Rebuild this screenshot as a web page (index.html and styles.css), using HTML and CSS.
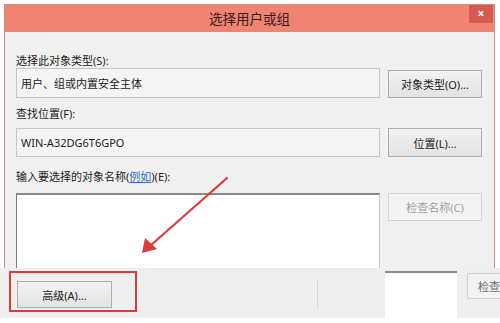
FILE: index.html
```html
<!DOCTYPE html>
<html lang="zh-CN">
<head>
<meta charset="utf-8">
<title>选择用户或组</title>
<link rel="stylesheet" href="styles.css">
</head>
<body>
<div class="dialog">
  <div class="titlebar">
    <span></span>
    <span class="title">选择用户或组</span>
    <span class="close">×</span>
  </div>
  <div class="content">
    <div class="label l1">选择此对象类型(S):</div>
    <div></div>
    <div class="field f1">用户、组或内置安全主体</div>
    <div class="btn b1">对象类型(O)...</div>
    <div class="label l2">查找位置(F):</div>
    <div></div>
    <div class="field f2">WIN-A32DG6T6GPO</div>
    <div class="btn b2">位置(L)...</div>
    <div class="label l3">输入要选择的对象名称(<span class="link">例如</span>)(E):</div>
    <div></div>
    <div class="textarea"></div>
    <div class="btn disabled b3">检查名称(C)</div>
  </div>
</div>
<div class="footer">
  <div class="btn adv">高级(A)...</div>
  <div class="ghost-line"></div>
  <div class="ghost-box"></div>
  <div class="btn ghost-btn">检查</div>
</div>
<div class="highlight"></div>
<svg class="arrow" width="500" height="323" viewBox="0 0 500 323">
  <line x1="227" y1="178" x2="150" y2="246" stroke="#e0393b" stroke-width="2.2" stroke-linecap="round"/>
  <polygon points="142,253 145,238 157,249" fill="#e0393b"/>
</svg>
</body>
</html>
```

FILE: styles.css
```css
html, body {
  margin: 0;
  padding: 0;
}
body {
  width: 500px;
  height: 323px;
  overflow: hidden;
  background: #ffffff;
  position: relative;
  font-family: "Noto Sans", "Noto Sans CJK SC", sans-serif;
  font-size: 11px;
  color: #222;
}
.dialog {
  margin: 4px 0 0 4px;
  width: 491px;
  height: 264px;
  box-sizing: border-box;
  border: 1px solid #c98e86;
  border-bottom: none;
  background: #f0f0f0;
  overflow: hidden;
}
.titlebar {
  height: 27px;
  background: #f08371;
  display: grid;
  grid-template-columns: 1fr auto 1fr;
  align-items: start;
}
.title {
  font-family: "Noto Sans CJK SC", sans-serif;
  font-size: 13.5px;
  line-height: 27px;
  color: #33211f;
}
.close {
  justify-self: end;
  width: 24px;
  height: 18px;
  margin-right: 1px;
  background: #d45a52;
  color: #fff;
  font-size: 12px;
  font-weight: bold;
  line-height: 18px;
  text-align: center;
}
.content {
  display: grid;
  grid-template-columns: 364px 94px;
  column-gap: 8px;
  padding: 0 12px 0 11px;
}
.label {
  line-height: 12px;
  height: 12px;
  white-space: nowrap;
}
.l1 { margin-top: 23px; margin-bottom: 1px; }
.l2 { margin-top: 10px; margin-bottom: 8px; }
.l3 { margin-top: 14px; margin-bottom: 10px; }
.link {
  color: #2a6fc9;
  text-decoration: underline;
}
.field {
  box-sizing: border-box;
  border: 1px solid #c6c6c6;
  background: #f4f4f4;
  padding-left: 4px;
  display: flex;
  align-items: center;
}
.f1 { height: 30px; }
.f2 { height: 29px; }
.btn {
  box-sizing: border-box;
  border: 1px solid #adadad;
  background: linear-gradient(#f2f2f2, #e3e3e3);
  display: flex;
  align-items: center;
  justify-content: center;
  white-space: nowrap;
}
.b1 { height: 28px; margin-top: 2px; }
.b2 { height: 29px; }
.b3 { height: 28px; }
.disabled {
  color: #a0a0a0;
  border-color: #d6d6d6;
  background: #f3f3f3;
}
.textarea {
  height: 90px;
  background: #fff;
  border-top: 2px solid #8a8a8a;
  border-left: 1px solid #7d7d7d;
  border-right: 1px solid #c6c6c6;
}
.footer {
  height: 50px;
  background: #efefef;
  display: flex;
  align-items: flex-start;
}
.footer > * {
  flex: none;
}
.adv {
  width: 95px;
  height: 27px;
  margin: 13px 0 0 17px;
}
.ghost-line {
  width: 1px;
  height: 28px;
  margin: 13px 0 0 205px;
  background: #d8d8d8;
}
.ghost-box {
  width: 72px;
  height: 47px;
  margin: 3px 0 0 67px;
  background: #fff;
  border-top: 2px solid #8a8a8a;
  box-sizing: border-box;
}
.ghost-btn {
  width: 50px;
  height: 26px;
  margin: 5px 0 0 10px;
  justify-content: flex-start;
  padding-left: 10px;
  color: #666;
  border-color: #d2d2d2;
  background: #f2f2f2;
  font-size: 11px;
}
.highlight {
  position: absolute;
  left: 9px;
  top: 271px;
  width: 128px;
  height: 41px;
  box-sizing: border-box;
  border: 2px solid #e0393b;
}
.arrow {
  position: absolute;
  left: 0;
  top: 0;
  pointer-events: none;
}
```
